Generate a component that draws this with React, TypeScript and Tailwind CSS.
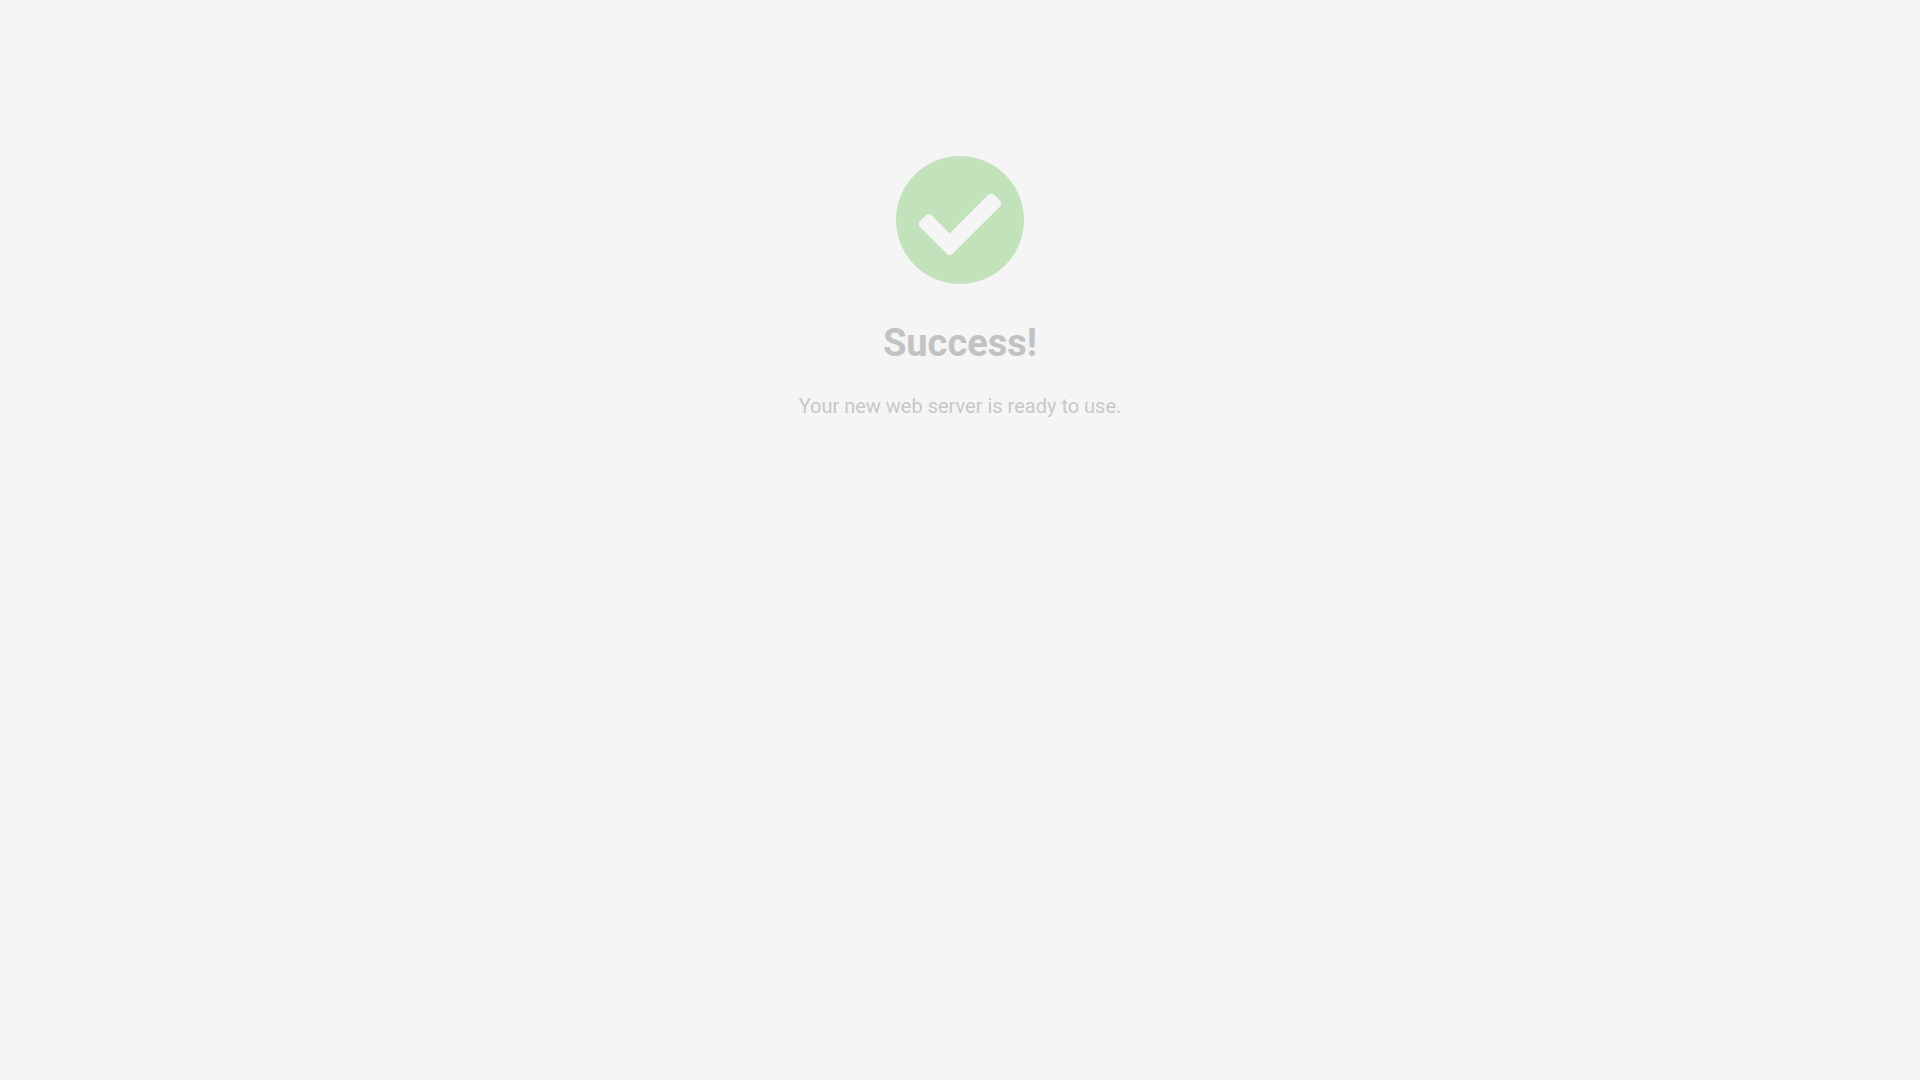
import { FaCheckCircle } from 'react-icons/fa';

export default function App() {
  return (
    <div className="min-h-screen bg-[#f5f5f5] font-[Roboto,sans-serif]">
      <main className="flex flex-col items-center px-4 pt-[154px] text-center">
        <FaCheckCircle className="h-[132px] w-[132px] text-[#c1e2bb]" aria-hidden="true" />
        <h1 className="mt-8 text-[38px] leading-[50px] font-bold text-[#c2c2c2]">Success!</h1>
        <p className="mt-6 text-xl leading-7 text-[#c8c8c8]">Your new web server is ready to use.</p>
      </main>
    </div>
  );
}
